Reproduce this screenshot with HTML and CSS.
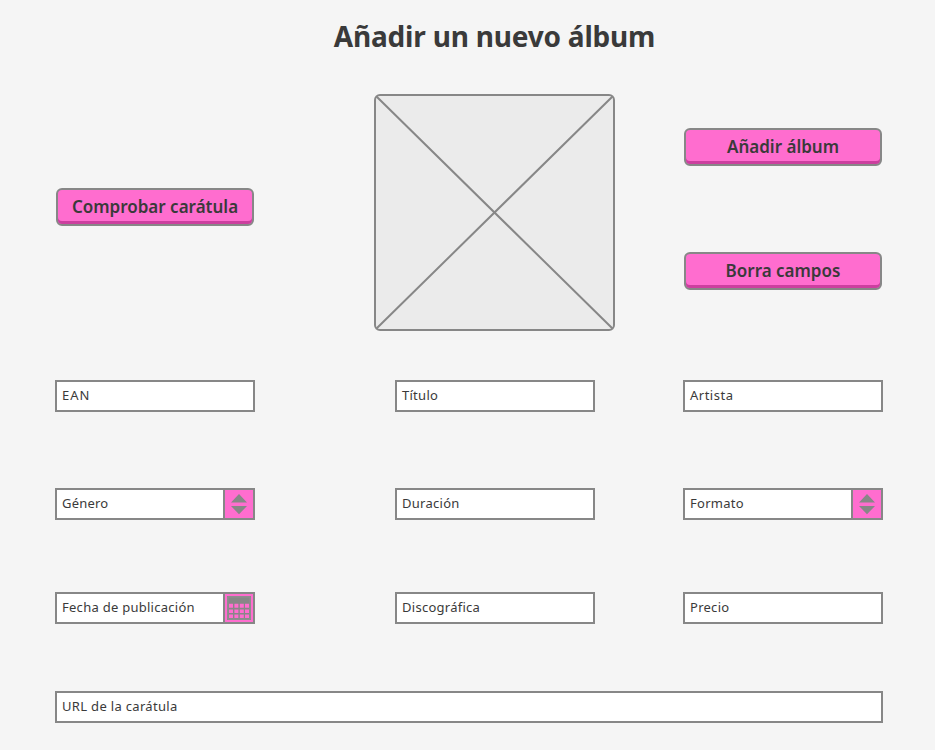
FILE: index.html
```html
<!DOCTYPE html>
<html lang="es">
<head>
<meta charset="utf-8">
<title>Añadir un nuevo álbum</title>
<link rel="stylesheet" href="styles.css">
</head>
<body>
<main class="page">
  <h1 class="title">Añadir un nuevo álbum</h1>
  <section class="top">
    <button class="btn check">Comprobar carátula</button>
    <svg class="cover" width="241" height="237" viewBox="0 0 241 237">
      <rect x="1" y="1" width="239" height="235" rx="5"/>
      <path d="M2.5 2.5L238.5 234.5M238.5 2.5L2.5 234.5"/>
    </svg>
    <div class="actions">
      <button class="btn">Añadir álbum</button>
      <button class="btn">Borra campos</button>
    </div>
  </section>
  <section class="fields">
    <div class="field code">EAN</div>
    <div class="field">Título</div>
    <div class="field artist">Artista</div>
    <div class="field genre">Género
      <svg class="addon" width="30" height="28" viewBox="0 0 30 28"><path d="M0 0H2V28H0z"/><path d="M8 12.5L16 4L24 12.5zM8 16L16 24.2L24 16z"/></svg>
    </div>
    <div class="field">Duración</div>
    <div class="field">Formato
      <svg class="addon" width="30" height="28" viewBox="0 0 30 28"><path d="M0 0H2V28H0z"/><path d="M8 12.5L16 4L24 12.5zM8 16L16 24.2L24 16z"/></svg>
    </div>
    <div class="field">Fecha de publicación
      <svg class="addon" width="30" height="28" viewBox="0 0 30 28">
        <path d="M0 0H2V28H0z"/>
        <rect x="4" y="2" width="24" height="24"/>
        <rect class="frame" x="4.9" y="2.9" width="22.2" height="22.2"/>
        <path class="cells" d="M6 9.8h4v4h-4zM11.4 9.8h4v4h-4zM16.8 9.8h4v4h-4zM22 9.8h4v4h-4zM6 15.4h4v3.6h-4zM11.4 15.4h4v3.6h-4zM16.8 15.4h4v3.6h-4zM22 15.4h4v3.6h-4zM6 20.6h4v3.5h-4zM11.4 20.6h4v3.5h-4zM16.8 20.6h4v3.5h-4zM22 20.6h4v3.5h-4z"/>
      </svg>
    </div>
    <div class="field">Discográfica</div>
    <div class="field">Precio</div>
    <div class="field wide">URL de la carátula</div>
  </section>
</main>
</body>
</html>
```
FILE: styles.css
```css
* { box-sizing: border-box; }
body {
  margin: 0;
  background: #f5f5f5;
  color: #3a3a3a;
  font-family: "Noto Sans", sans-serif;
}
.page { width: 935px; height: 750px; overflow: hidden; }
.title {
  margin: 0 0 0 54px;
  height: 94px;
  padding-top: 16px;
  text-align: center;
  font-size: 28px;
  line-height: 40px;
  font-weight: 700;
  letter-spacing: -.2px;
  white-space: nowrap;
}
.top {
  display: grid;
  grid-template-columns: 318px 310px 198px;
  height: 286px;
  padding-left: 56px;
}
.cover { display: block; }
.cover rect { fill: #ebebeb; stroke: #878787; stroke-width: 2; }
.cover path { fill: none; stroke: #878787; stroke-width: 2; }
.btn {
  display: block;
  width: 198px;
  height: 38px;
  padding: 0;
  border: 2px solid #878787;
  border-radius: 6px;
  background: #ff6dcf;
  box-shadow: inset 0 -3px #cc3f9f;
  color: #3a3a3a;
  font: 600 17px/24px "Noto Sans", sans-serif;
  white-space: nowrap;
}
.check { margin-top: 94px; }
.actions {
  display: flex;
  flex-direction: column;
  gap: 86px;
  padding-top: 34px;
}
.fields {
  display: grid;
  grid-template-columns: 340px 288px 200px;
  grid-template-rows: 108px 104px 99px 32px;
  width: 828px;
  margin-left: 55px;
}
.field {
  display: flex;
  justify-content: space-between;
  width: 200px;
  height: 32px;
  padding-left: 5px;
  border: 2px solid #878787;
  background: #fff;
  font-size: 13px;
  line-height: 26px;
  letter-spacing: .27px;
  white-space: nowrap;
}
.code { letter-spacing: 1px; }
.artist { letter-spacing: .5px; }
.genre { letter-spacing: .2px; }
.wide { grid-column: 1 / -1; width: 828px; letter-spacing: .32px; }
.addon { flex: none; display: block; background: #ff6dcf; fill: #878787; }
.frame { fill: none; stroke: #999; stroke-width: .6; }
.cells { fill: #ff6dcf; }
```
